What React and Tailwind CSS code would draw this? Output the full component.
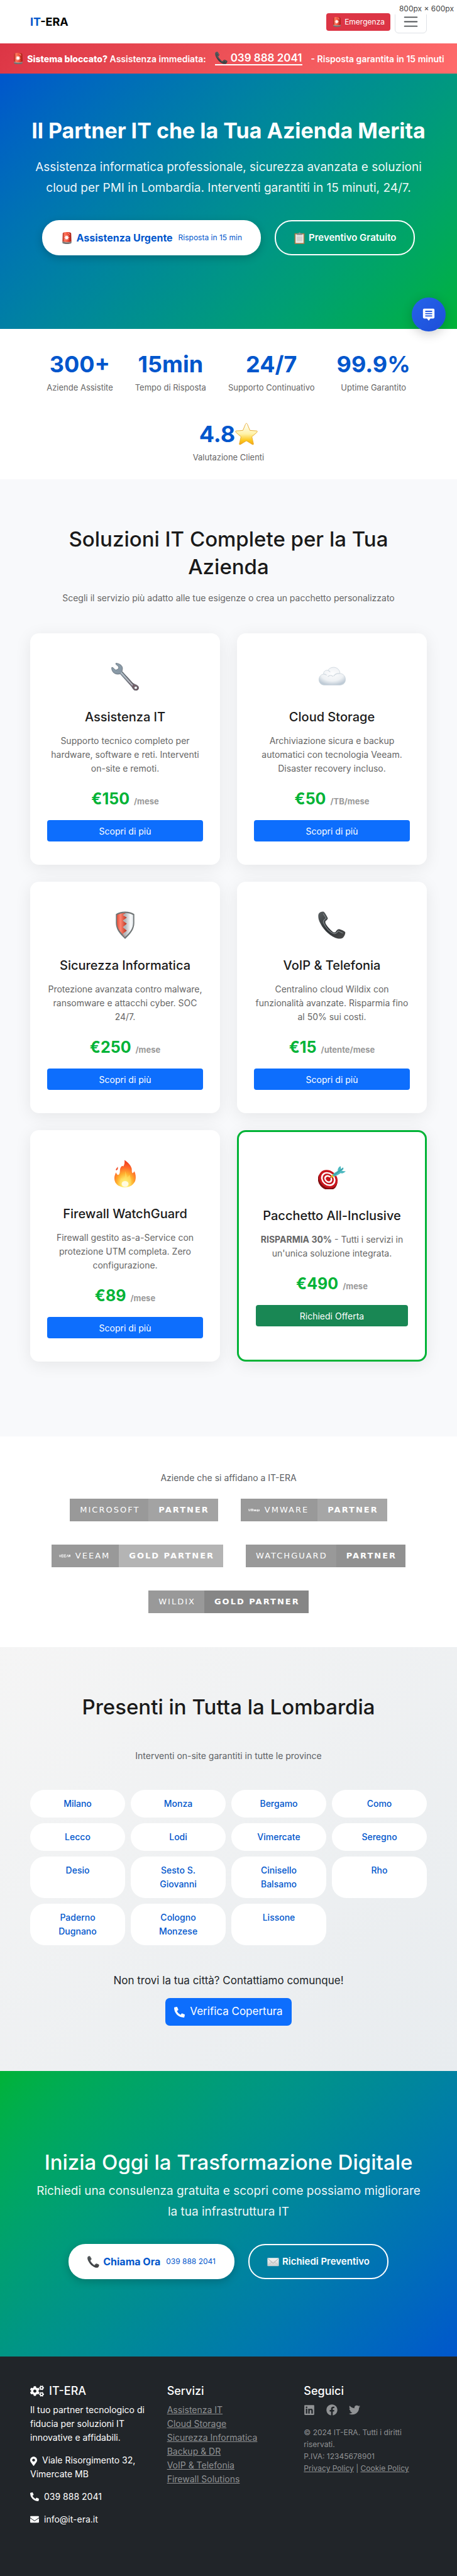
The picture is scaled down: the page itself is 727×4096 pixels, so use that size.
import { FaCogs, FaFacebook, FaEnvelope, FaLinkedin, FaMapMarkerAlt, FaPhoneAlt, FaTwitter } from "react-icons/fa";

function Siren({ className }) {
  return (
    <svg viewBox="0 0 48 48" className={className} aria-hidden="true">
      <defs>
        <linearGradient id="siren-red" x1="0" x2="1">
          <stop offset="0" stopColor="#a82217" />
          <stop offset="0.25" stopColor="#ff7a60" />
          <stop offset="0.6" stopColor="#f2503a" />
          <stop offset="1" stopColor="#9c1810" />
        </linearGradient>
      </defs>
      <path d="M6 38h36v5c0 2-4 5-18 5S6 45 6 43z" fill="#6f6f6f" />
      <path d="M7 6c0-4 7-6 17-6s17 2 17 6l1 32c-3 4-33 4-36 0z" fill="url(#siren-red)" />
      <path d="M6 37c6 4 30 4 36 0v3c-6 4-30 4-36 0z" fill="#a89a97" />
      <path d="M23 12l2 5 5-3-2 6 7 2-7 2 2 6-5-3-2 6-2-6-5 3 2-6-6-2 6-2-2-6 5 3z" fill="#fff" />
      <path d="M29 6c4 0 6 2 6 5" fill="none" stroke="#ffd9d2" strokeWidth="2" />
    </svg>
  );
}

function Handset({ className }) {
  return (
    <svg viewBox="0 0 48 48" className={className} aria-hidden="true">
      <defs>
        <linearGradient id="handset" x1="0" x2="1" y1="0" y2="1">
          <stop offset="0" stopColor="#5a5f61" />
          <stop offset="0.5" stopColor="#2f3336" />
          <stop offset="1" stopColor="#4a4a4a" />
        </linearGradient>
      </defs>
      <path
        d="M2 3C4 1 8 0 10 1c2 1 6 9 7 11 0 2-3 4-4 5-1 2 0 4 1 6 3 5 7 9 12 13 2 1 4 1 5-1s3-4 5-4c3 0 9 3 11 5 1 3-2 8-4 10-3 2-8 2-13 0C17 41 5 27 1 14 0 9 0 5 2 3z"
        fill="url(#handset)"
      />
      <path d="M9 4l5 8c-3 2-5 4-5 7 4 9 11 17 19 20 3 0 5-2 7-5l8 4" fill="none" stroke="#858b8e" strokeWidth="1.2" />
    </svg>
  );
}

function Wrench({ className }) {
  return (
    <svg viewBox="0 0 48 48" className={className} aria-hidden="true">
      <defs>
        <linearGradient id="wrench" x1="0" x2="1" y1="0" y2="1">
          <stop offset="0" stopColor="#8ba0ae" />
          <stop offset="0.45" stopColor="#8794a0" />
          <stop offset="1" stopColor="#6b4a50" />
        </linearGradient>
      </defs>
      <path
        fillRule="evenodd"
        d="M8 .6l2 .2c5 .8 9 4 9.5 8 .2 2-.3 4-.8 6L36 34c2 2 5 3 8 4.500 3 1.500 4 4 3.500 6-.8 3-4 4-7 3-2-1-3-3-5-6L15.500 19c-3 1-7 1-10-1C2 16 .3 12 .8 8l2 0 4 4c2 1 5-1 6-3 .4-2-.5-3-2-4.200L8 2.500zM42.500 40.700a2.500 2.500 0 1 0 .01 0z"
        fill="url(#wrench)"
        stroke="#59636d"
        strokeWidth=".8"
      />
      <path d="M17 17l20 22" stroke="#c2ccd3" strokeWidth="1.500" />
      <path d="M19 15.500l20 21.500" stroke="#4f5459" strokeWidth="1" />
    </svg>
  );
}

function Cloud({ className }) {
  return (
    <svg viewBox="0 0 48 48" className={className} aria-hidden="true">
      <defs>
        <radialGradient id="cloud" cx=".5" cy=".35" r=".65">
          <stop offset="0" stopColor="#fdfdfe" />
          <stop offset=".65" stopColor="#eef1f4" />
          <stop offset="1" stopColor="#bfcbd6" />
        </radialGradient>
      </defs>
      <path
        d="M11 38.500C5 38.500 1.500 34 1.500 29c0-5 3.500-9 8-9.500C9 15 13 12 17 13c2-3.500 6-5.300 10-5.300 6 0 11 4.500 11 10.800 6 0 9.500 5 9.500 10.500 0 5.500-4 9.500-9.500 9.500z"
        fill="url(#cloud)"
        stroke="#c6d0d9"
        strokeWidth=".8"
      />
      <path d="M9.500 19.500c2 0 4 .5 5.500 2M17 13c2 .5 3 1.500 4 3M17 24c3-3 7-3 9 0M27 23c2-3 6-5 11-4.500" fill="none" stroke="#d0d8df" strokeWidth="1.200" />
    </svg>
  );
}

function Shield({ className }) {
  return (
    <svg viewBox="0 0 48 48" className={className} aria-hidden="true">
      <defs>
        <linearGradient id="shield-red" x1="0" x2="1">
          <stop offset="0" stopColor="#e4513b" />
          <stop offset=".35" stopColor="#ff8571" />
          <stop offset="1" stopColor="#b9301c" />
        </linearGradient>
        <linearGradient id="shield-white" x1="0" x2="1">
          <stop offset="0" stopColor="#aeb3b7" />
          <stop offset=".7" stopColor="#fbfcfd" />
          <stop offset="1" stopColor="#dfe4e8" />
        </linearGradient>
      </defs>
      <path d="M24 .5c6 0 12 1.500 16 4.500v15c0 11-6 19-16 28C14 39 8 31 8 20V5C12 2 18 .5 24 .5z" fill="#6f7475" />
      <path d="M24 3c5 0 10 1 14 3.500V20c0 9-5 16.500-14 24.500z" fill="url(#shield-white)" />
      <path d="M20 3h4v42l-4-4z" fill="#b3b7ba" />
      <path d="M10 6.500C14 4 19 3 25 3l-5 3.500 7 4.500-7 5 7 5.500-7 6 7 6-7 5.500 5 5.500C15 36.500 10 29 10 20z" fill="url(#shield-red)" />
    </svg>
  );
}

function Fire({ className }) {
  return (
    <svg viewBox="0 0 48 48" className={className} aria-hidden="true">
      <defs>
        <radialGradient id="flame" cx=".5" cy=".88" r=".85">
          <stop offset="0" stopColor="#fffde0" />
          <stop offset=".18" stopColor="#ffee70" />
          <stop offset=".45" stopColor="#ffb02e" />
          <stop offset=".72" stopColor="#ff6a2a" />
          <stop offset="1" stopColor="#f0371c" />
        </radialGradient>
      </defs>
      <path
        d="M23 .5c6 4 11 9 12.500 15 .5 3-.5 6 1.500 8 1.500-1 2.500-2 3-3.500 2.500 5 3 11 2 15-.5 3-2 5-3.500 6.500C35 46 29 48 24 48S12 46 9 42C6 39 5 34 5.500 30c.3-3 1.500-5 2.500-8 1 2 2 4 4 4.500 2-1 3-4 3-7 0-4 1-7 4-9 1 0 1 1 2 1 2-3 2.500-7 2-11z"
        fill="url(#flame)"
      />
      <path d="M11 12c-1 3-3 3-3 6 1 1 2 0 3-1 .8-2 .8-3 0-5z" fill="#f2502a" />
      <path d="M24 20c2 4 3 8 3 11 2-1 4-3 5-5 1 6 3 8 2 13-1 4-5 7-10 7s-9-3-9-7c0-3 1-5 2-7 2 1 3 2 4 3 3-4 4-9 3-15z" fill="#ffe066" opacity=".55" />
      <ellipse cx="24" cy="42" rx="6" ry="5" fill="#fffbe0" />
    </svg>
  );
}

function Target({ className }) {
  return (
    <svg viewBox="0 0 48 48" className={className} aria-hidden="true">
      <g transform="rotate(40 17 31)">
        <ellipse cx="18" cy="33" rx="18" ry="15" fill="#7f0d10" />
        <ellipse cx="17" cy="30" rx="17.500" ry="14.500" fill="#c8161d" />
        <ellipse cx="17" cy="30" rx="13.500" ry="11" fill="#fff" />
        <ellipse cx="17" cy="30" rx="10.500" ry="8.500" fill="#c8161d" />
        <ellipse cx="17" cy="30" rx="7.500" ry="6" fill="#fff" />
        <ellipse cx="17" cy="30" rx="4.500" ry="3.500" fill="#c8161d" />
      </g>
      <path d="M20 29l5-4" stroke="#8a1010" strokeWidth="1.500" />
      <path d="M22 28l1-4 3-2 2 3-2 2z" fill="#e8b923" />
      <path d="M25 23c2-3 6-5 9-7 0-4 2-7 5-8l1 5 3-3c1 0 1 2 1 3l-3 3 7 1c-3 3-6 4-9 3-4 3-8 5-11 6z" fill="#4db9c0" />
      <path d="M27 24L43 12" stroke="#2b8790" strokeWidth="1" />
    </svg>
  );
}

function Star({ className }) {
  return (
    <svg viewBox="0 0 48 48" className={className} aria-hidden="true">
      <defs>
        <linearGradient id="star" x1="0" x2="0" y1="0" y2="1">
          <stop offset="0" stopColor="#fff" />
          <stop offset=".5" stopColor="#fff2a8" />
          <stop offset=".8" stopColor="#fdc81e" />
          <stop offset="1" stopColor="#f2a516" />
        </linearGradient>
      </defs>
      <path
        d="M24 1.500c1 0 1.500 1 2 2l5.500 13 14 1c2 .2 2 2 .8 3L35.500 30l3.500 14.500c.4 2-1 2.500-2.500 1.700L24 38.500l-12.500 7.700C10 47 8.600 46.500 9 44.500L12.500 30 1.700 20.500c-1.200-1-1.200-2.800.8-3l14-1L22 3.500c.5-1 1-2 2-2z"
        fill="url(#star)"
        stroke="#e5a92c"
        strokeWidth="1.200"
      />
    </svg>
  );
}

function Clipboard({ className }) {
  return (
    <svg viewBox="0 0 48 48" className={className} aria-hidden="true">
      <rect x="4" y="5" width="40" height="43" rx="2" fill="#a87846" />
      <rect x="8" y="9" width="32" height="35" fill="#e9e9e7" />
      <rect x="13" y="17" width="22" height="20" fill="#d2d2d0" />
      <path d="M13 12V6h7c0-3 1.500-5 4-5s4 2 4 5h7v6z" fill="#8b9192" />
    </svg>
  );
}

function Letter({ className }) {
  return (
    <svg viewBox="0 0 48 48" className={className} aria-hidden="true">
      <defs>
        <linearGradient id="letter" x1="0" x2="0" y1="0" y2="1">
          <stop offset="0" stopColor="#f5f5f5" />
          <stop offset="1" stopColor="#cfcfcf" />
        </linearGradient>
      </defs>
      <rect x="1" y="8" width="46" height="33" rx="2" fill="url(#letter)" />
      <path d="M2 39l17-15M46 39L29 24" stroke="#b5b5b5" strokeWidth="1.500" />
      <path d="M2 10l20 18c1.500 1.200 2.500 1.200 4 0L46 10" fill="none" stroke="#999" strokeWidth="2" />
    </svg>
  );
}

const stats = [
  ["300+", "Aziende Assistite"],
  ["15min", "Tempo di Risposta"],
  ["24/7", "Supporto Continuativo"],
  ["99.9%", "Uptime Garantito"],
  ["4.8", "Valutazione Clienti"],
];

const services = [
  { Icon: Wrench, title: "Assistenza IT", text: "Supporto tecnico completo per hardware, software e reti. Interventi on-site e remoti.", price: "€150", unit: "/mese" },
  { Icon: Cloud, title: "Cloud Storage", text: "Archiviazione sicura e backup automatici con tecnologia Veeam. Disaster recovery incluso.", price: "€50", unit: "/TB/mese" },
  { Icon: Shield, title: "Sicurezza Informatica", text: "Protezione avanzata contro malware, ransomware e attacchi cyber. SOC 24/7.", price: "€250", unit: "/mese" },
  { Icon: Handset, title: "VoIP & Telefonia", text: "Centralino cloud Wildix con funzionalità avanzate. Risparmia fino al 50% sui costi.", price: "€15", unit: "/utente/mese" },
  { Icon: Fire, title: "Firewall WatchGuard", text: "Firewall gestito as-a-Service con protezione UTM completa. Zero configurazione.", price: "€89", unit: "/mese" },
  { Icon: Target, title: "Pacchetto All-Inclusive", strong: "RISPARMIA 30%", text: " - Tutti i servizi in un'unica soluzione integrata.", price: "€490", unit: "/mese", featured: true },
];

const partners = [
  { name: "MICROSOFT", level: "PARTNER", tone: "bg-[#a3a3a3]" },
  { name: "VMWARE", level: "PARTNER", tone: "bg-[#a6a6a6]", mark: "vmware" },
  { name: "VEEAM", level: "GOLD PARTNER", tone: "bg-[#b4b4b4]", mark: "veeam" },
  { name: "WATCHGUARD", level: "PARTNER", tone: "bg-[#919191]" },
  { name: "WILDIX", level: "GOLD PARTNER", tone: "bg-[#868686]" },
];

const cities = [
  "Milano", "Monza", "Bergamo", "Como", "Lecco", "Lodi", "Vimercate", "Seregno",
  "Desio", "Sesto S. Giovanni", "Cinisello Balsamo", "Rho", "Paderno Dugnano", "Cologno Monzese", "Lissone",
];

const footerLinks = ["Assistenza IT", "Cloud Storage", "Sicurezza Informatica", "Backup & DR", "VoIP & Telefonia", "Firewall Solutions"];

function PartnerMark({ kind }) {
  const d =
    kind === "vmware"
      ? "M0 2l1.500 4L3 2M4 6V3q1-1.500 2 0v3V3q1-1.500 2 0v3M9 3l1 3 1-3 1 3 1-3M14 4q2-2 2 0v2h-2v-1.500h2M17.500 3v3"
      : "M0 2l1.500 4L3 2M7 6H4V2h3M4 4h3M11 6H8V2h3M8 4h3M12 6l1.500-4L15 6M16 6V2l1 3 1-3v4";
  return (
    <svg viewBox="0 0 18 8" className="mr-2 h-2 w-[18px]" aria-hidden="true">
      <path d={d} fill="none" stroke="#fff" strokeWidth=".8" />
    </svg>
  );
}

function SolidPill({ icon, label, note }) {
  return (
    <a href="#contatti" className="flex h-14 items-center rounded-[27px] bg-white px-[30px] text-base font-bold text-[#0056cc] shadow-[0_4px_14px_rgba(0,0,0,0.2)]">
      {icon}
      <span className="ml-[6px]">{label}</span>
      <small className="ml-[9px] text-[12px] font-normal">{note}</small>
    </a>
  );
}

function OutlinePill({ icon, label }) {
  return (
    <a href="#preventivo" className="flex h-14 items-center rounded-[27px] border-2 border-white px-7 text-[15px] font-semibold text-white">
      {icon}
      <span className="ml-[5px]">{label}</span>
    </a>
  );
}

export default function App() {
  return (
    <div className="relative bg-white font-['Inter','Liberation_Sans',sans-serif] text-[#212529]">
      <header className="flex h-[69px] items-center justify-between px-12">
        <a href="#home" className="text-lg font-bold text-black">
          <span className="text-[#0056cc]">IT</span>-ERA
        </a>
        <div className="flex items-center gap-[7px]">
          <a href="#emergenza" className="flex h-7 items-center rounded bg-[#dc3545] px-[9px] text-[12px] text-white">
            <Siren className="mr-1 h-4 w-4" />
            Emergenza
          </a>
          <button type="button" aria-label="Menu" className="flex h-9 w-[51px] items-center justify-center rounded-md border border-[#dee2e6]">
            <svg viewBox="0 0 30 30" className="h-[27px] w-[27px]" fill="none" stroke="#4d5154" strokeWidth="2" strokeLinecap="round">
              <path d="M4 7h22M4 15h22M4 23h22" />
            </svg>
          </button>
        </div>
      </header>
      <div className="absolute top-0 right-0 bg-white/90 pt-[5px] pr-[5px] pb-[1px] pl-2 text-[12px] leading-[17px] text-[#444]">800px × 600px</div>

      <div className="flex h-12 items-center justify-center whitespace-nowrap bg-linear-135 from-[#dc3545] to-[#ff6b6b] text-[14px] font-semibold text-white">
        <Siren className="mr-[5px] h-[18px] w-[18px]" />
        <span>
          <strong className="font-extrabold">Sistema bloccato?</strong> Assistenza immediata:
        </span>
        <a href="tel:0398882041" className="mx-[14px] flex items-center border-b-2 border-white text-[17px] leading-[18px]">
          <Handset className="mr-[5px] h-5 w-5" />
          039 888 2041
        </a>
        <span>- Risposta garantita in 15 minuti</span>
      </div>

      <section className="bg-linear-135 from-[#0056cc] to-[#00b336] px-12 pt-[69px] pb-[117px] text-center text-white">
        <h1 className="text-[34px] leading-[44px] font-bold">Il Partner IT che la Tua Azienda Merita</h1>
        <p className="mt-[19px] text-[19px] leading-[33px] text-white/95">
          Assistenza informatica professionale, sicurezza avanzata e soluzioni cloud per PMI in Lombardia. Interventi garantiti in 15 minuti, 24/7.
        </p>
        <div className="mt-[35px] flex justify-center gap-[22px]">
          <SolidPill icon={<Siren className="h-[19px] w-[19px]" />} label="Assistenza Urgente" note="Risposta in 15 min" />
          <OutlinePill icon={<Clipboard className="h-[19px] w-[19px]" />} label="Preventivo Gratuito" />
        </div>
      </section>

      <section className="flex flex-wrap justify-center gap-x-[35px] gap-y-[42px] px-12 pt-[34px] pb-[25px] text-center">
        {stats.map(([value, label]) => (
          <div key={label}>
            <div className="flex items-center justify-center text-[36px] leading-[44px] font-bold text-[#0056cc]">
              {value}
              {value === "4.8" && <Star className="h-9 w-9" />}
            </div>
            <div className="mt-[5px] text-[13px] leading-5 text-[#666]">{label}</div>
          </div>
        ))}
      </section>

      <section className="bg-[#f8f9fb] px-12 pt-[73px] pb-[119px]">
        <h2 className="text-center text-[33px] leading-[44px] font-medium text-[#1a1a1a]">
          Soluzioni IT Complete per la Tua
          <br />
          Azienda
        </h2>
        <p className="mt-[17px] text-center text-[14px] leading-[22px] text-[#666]">Scegli il servizio più adatto alle tue esigenze o crea un pacchetto personalizzato</p>
        <div className="mt-[45px] grid grid-cols-2 gap-[27px]">
          {services.map(({ Icon, title, strong, text, price, unit, featured }) => (
            <article
              key={title}
              className={`flex flex-col items-center rounded-[14px] bg-white px-[27px] pt-[47px] pb-[37px] text-center shadow-[0_5px_27px_rgba(0,0,0,0.08)] ${featured ? "border-3 border-[#00b336]" : ""}`}
            >
              <Icon className="h-11 w-11" />
              <h3 className="mt-[29px] text-xl leading-[26px] font-medium text-[#1a1a1a]">{title}</h3>
              <p className="mt-[14px] text-[14px] leading-[22px] text-[#666]">
                {strong && <strong>{strong}</strong>}
                {text}
              </p>
              <div className="mt-[22px] flex items-baseline gap-[7px] text-[25px] leading-[30px] font-bold text-[#00b336]">
                {price}
                <span className="text-[13px] leading-4 text-[#999]">{unit}</span>
              </div>
              <a href="#servizi" className={`mt-[19px] flex h-[34px] w-full items-center justify-center rounded text-[14px] text-white ${featured ? "bg-[#198754]" : "bg-[#0d6efd]"}`}>
                {featured ? "Richiedi Offerta" : "Scopri di più"}
              </a>
            </article>
          ))}
        </div>
      </section>

      <section className="px-12 pt-[55px] pb-[54px]">
        <p className="text-center text-[14px] leading-[22px] text-[#5c6064]">Aziende che si affidano a IT-ERA</p>
        <div className="mt-[22px] flex flex-wrap justify-center gap-x-9 gap-y-[37px] font-['Verdana','DejaVu_Sans',sans-serif] text-[13px] tracking-[2px] text-white">
          {partners.map(({ name, level, tone, mark }) => (
            <div key={name} className="flex h-9">
              <span className={`flex items-center bg-[#999] pr-[14px] ${mark ? "pl-3" : "pl-4"}`}>
                {mark && <PartnerMark kind={mark} />}
                {name}
              </span>
              <span className={`flex items-center pr-[14px] pl-4 font-bold ${tone}`}>{level}</span>
            </div>
          ))}
        </div>
      </section>

      <section className="bg-linear-135 from-[#f5f5f5] to-[#e8ecef] px-12 pt-[73px] pb-[72px] text-center">
        <h2 className="text-[33px] leading-[44px] font-medium text-[#1a1a1a]">Presenti in Tutta la Lombardia</h2>
        <p className="mt-[45px] text-[14px] leading-[22px] text-[#5c6064]">Interventi on-site garantiti in tutte le province</p>
        <div className="mt-[43px] grid grid-cols-4 gap-[9px]">
          {cities.map((city) => (
            <a key={city} href="#copertura" className="rounded-[23px] bg-white px-[22px] py-[11px] text-[14px] leading-[22px] font-medium text-[#0056cc]">
              {city}
            </a>
          ))}
        </div>
        <p className="mt-[42px] text-[17px] leading-7">Non trovi la tua città? Contattiamo comunque!</p>
        <a href="tel:0398882041" className="mx-auto mt-[14px] flex h-11 w-fit items-center gap-2 rounded-[7px] bg-[#0d6efd] px-[14px] text-[17px] text-white">
          <FaPhoneAlt />
          Verifica Copertura
        </a>
      </section>

      <section className="bg-linear-135 from-[#00b336] to-[#0056cc] px-12 py-[123px] text-center text-white">
        <h2 className="text-[33px] leading-[44px] font-medium">Inizia Oggi la Trasformazione Digitale</h2>
        <p className="mt-[7px] text-[19px] leading-[33px] text-white/95">Richiedi una consulenza gratuita e scopri come possiamo migliorare la&nbsp;tua infrastruttura IT</p>
        <div className="mt-[35px] flex justify-center gap-[22px]">
          <SolidPill icon={<Handset className="h-[19px] w-[19px]" />} label="Chiama Ora" note="039 888 2041" />
          <OutlinePill icon={<Letter className="h-[19px] w-[19px]" />} label="Richiedi Preventivo" />
        </div>
      </section>

      <footer className="grid grid-cols-3 gap-x-[22px] bg-[#212529] px-12 pt-11 pb-[79px] text-[14px] leading-[22px] text-white">
        <div>
          <h5 className="flex items-center gap-2 text-lg leading-[22px] font-medium">
            <FaCogs className="h-5 w-[22px]" />
            IT-ERA
          </h5>
          <p className="mt-2">Il tuo partner tecnologico di fiducia per soluzioni IT innovative e affidabili.</p>
          <p className="mt-[14px]">
            <FaMapMarkerAlt className="mr-2 inline h-[15px] w-[11px]" />
            Viale Risorgimento 32, Vimercate MB
          </p>
          <p className="mt-[14px] flex items-center gap-2">
            <FaPhoneAlt />
            039 888 2041
          </p>
          <p className="mt-[14px] flex items-center gap-2">
            <FaEnvelope />
            info@it-era.it
          </p>
        </div>
        <div>
          <h5 className="text-lg leading-[22px] font-medium">Servizi</h5>
          <ul className="mt-2 text-[#909294]">
            {footerLinks.map((label) => (
              <li key={label}>
                <a href="#servizi" className="underline">{label}</a>
              </li>
            ))}
          </ul>
        </div>
        <div className="text-[#909294]">
          <h5 className="text-lg leading-[22px] font-medium text-white">Seguici</h5>
          <div className="mt-2 flex h-[22px] items-center gap-[18px] text-lg">
            <a href="#linkedin" aria-label="LinkedIn"><FaLinkedin /></a>
            <a href="#facebook" aria-label="Facebook"><FaFacebook /></a>
            <a href="#twitter" aria-label="Twitter"><FaTwitter /></a>
          </div>
          <p className="mt-[15px] text-[12px] leading-[19px]">
            © 2024 IT-ERA. Tutti i diritti riservati.
            <br />
            P.IVA: 12345678901
            <br />
            <a href="#privacy" className="underline">Privacy Policy</a> | <a href="#cookie" className="underline">Cookie Policy</a>
          </p>
        </div>
      </footer>

      <button
        type="button"
        aria-label="Apri chat"
        className="absolute top-[473px] right-[18px] flex h-[54px] w-[54px] items-center justify-center rounded-full bg-linear-135 from-[#2563eb] to-[#1d4ed8] shadow-[0_4px_18px_rgba(0,0,0,0.2)]"
      >
        <svg viewBox="0 0 24 24" className="h-[22px] w-[22px]" aria-hidden="true">
          <path d="M4 2h16a2 2 0 0 1 2 2v13a2 2 0 0 1-2 2h-5l-3 4-3-4H4a2 2 0 0 1-2-2V4a2 2 0 0 1 2-2z" fill="#fff" />
          <path d="M6 6.500h12M6 10.500h12M6 14.500h12" stroke="#2158e2" strokeWidth="2" />
        </svg>
      </button>
    </div>
  );
}
